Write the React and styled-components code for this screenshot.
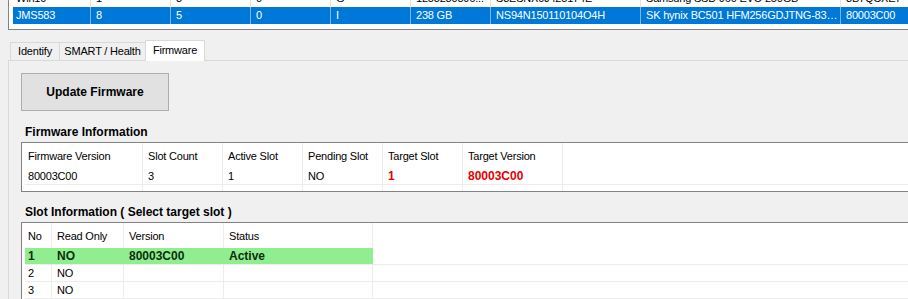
import React from "react";
import styled, { createGlobalStyle } from "styled-components";

const GlobalStyle = createGlobalStyle`
  html, body {
    margin: 0;
    padding: 0;
    background: #f0f0f0;
    overflow: hidden;
  }
  body {
    font-family: "Liberation Sans", Arial, sans-serif;
    font-size: 11px;
    letter-spacing: -0.2px;
    color: #000;
  }
  * {
    box-sizing: border-box;
  }
`;

const Page = styled.div`
  width: 908px;
  height: 299px;
  overflow: hidden;
  background: #f0f0f0;
  display: flex;
  flex-direction: column;
`;

const DriveList = styled.div`
  margin-left: 8px;
  height: 30px;
  flex: none;
  background: #ffffff;
  border-left: 1px solid #828282;
  border-bottom: 1px solid #828282;
  padding-left: 4px;
  overflow: hidden;
`;

const DriveRows = styled.div`
  margin-top: -10px;
`;

const DriveRow = styled.div`
  display: flex;
  height: 17px;
  width: 1000px;
  background: ${(p) => (p.$selected ? "#0078d7" : "transparent")};
  color: ${(p) => (p.$selected ? "#ffffff" : "#000000")};
`;

const DriveCell = styled.div`
  flex: none;
  width: ${(p) => p.$width}px;
  line-height: 17px;
  padding: 0 5px;
  white-space: nowrap;
  overflow: hidden;
  border-right: 1px solid ${(p) => (p.$selected ? "#7fb6e6" : "#e4e4e4")};

  &:first-child {
    padding-left: 3px;
  }
`;

const TabBar = styled.div`
  display: flex;
  align-items: flex-end;
  height: 20px;
  margin-top: 10px;
  padding-left: 10px;
  flex: none;
`;

const Tab = styled.div`
  width: ${(p) => p.$width}px;
  height: ${(p) => (p.$active ? 21 : 18)}px;
  line-height: ${(p) => (p.$active ? 19 : 17)}px;
  margin-left: -1px;
  margin-bottom: ${(p) => (p.$active ? -1 : 0)}px;
  border: 1px solid #d9d9d9;
  border-bottom: none;
  background: ${(p) => (p.$active ? "#ffffff" : "#f0f0f0")};
  text-align: center;
  white-space: nowrap;
  position: ${(p) => (p.$active ? "relative" : "static")};
  z-index: ${(p) => (p.$active ? 1 : "auto")};

  &:first-child {
    margin-left: 0;
  }
`;

const Panel = styled.div`
  flex: 1;
  margin-left: 8px;
  border-top: 1px solid #d9d9d9;
  border-left: 1px solid #d9d9d9;
  background: #f0f0f0;
  padding: 12px 0 0 12px;
  display: flex;
  flex-direction: column;
  align-items: flex-start;
`;

const ActionButton = styled.button`
  width: 148px;
  height: 38px;
  margin: 0 0 1px 0;
  background: #e1e1e1;
  border: 1px solid #adadad;
  border-radius: 0;
  font-family: "Liberation Sans", Arial, sans-serif;
  font-size: 12px;
  font-weight: bold;
  letter-spacing: 0;
  color: #000;
  padding: 0;
`;

const SectionTitle = styled.div`
  margin: 12px 0 2px 4px;
  line-height: 16px;
  font-size: 12px;
  font-weight: bold;
  letter-spacing: 0;
`;

const ListView = styled.div`
  width: 1000px;
  flex: none;
  background: #ffffff;
  border: 1px solid #828282;
  display: flex;
  flex-direction: column;
`;

const ListRow = styled.div`
  display: flex;
  height: ${(p) => p.$height}px;
  margin-left: 3px;
  border-bottom: ${(p) => (p.$lined ? "1px solid #ececec" : "none")};
`;

const ListCell = styled.div`
  flex: none;
  width: ${(p) => p.$width}px;
  display: flex;
  align-items: center;
  padding: 0 5px;
  white-space: nowrap;
  overflow: hidden;
  background: ${(p) => p.$bg || "transparent"};
  border-right: 1px solid ${(p) => p.$bg || "#ececec"};
  color: ${(p) => p.$color || "#000"};
  font-weight: ${(p) => (p.$bold ? "bold" : "normal")};
  font-size: ${(p) => (p.$bold ? 12 : 11)}px;
  letter-spacing: ${(p) => (p.$bold ? 0 : -0.2)}px;

  &:first-child {
    padding-left: 3px;
  }
`;

const Filler = styled.div`
  flex: 1;
`;

const driveColumns = [78, 80, 80, 80, 80, 80, 150, 200, 120];

const drives = [
  ["Win10", "1", "3", "0", "G", "1255280896...", "S3ESNX0J425174E", "Samsung SSD 960 EVO 250GB", "3B7QCXE7"],
  ["JMS583", "8", "5", "0", "I", "238 GB", "NS94N150110104O4H", "SK hynix BC501 HFM256GDJTNG-83…", "80003C00"],
];

const RED = "#e60000";
const GREEN = "#90ee90";
const DARK_GREEN = "#0e2e0e";

const firmwareColumns = [118, 80, 80, 80, 80, 100];
const firmwareRows = [
  {
    cells: [
      { text: "80003C00" },
      { text: "3" },
      { text: "1" },
      { text: "NO" },
      { text: "1", bold: true, color: RED },
      { text: "80003C00", bold: true, color: RED },
    ],
  },
];
const firmwareHeader = ["Firmware Version", "Slot Count", "Active Slot", "Pending Slot", "Target Slot", "Target Version"];

const slotColumns = [27, 72, 100, 149];
const slotHeader = ["No", "Read Only", "Version", "Status"];
const slotRows = [
  {
    bg: GREEN,
    cells: [
      { text: "1", bold: true, color: DARK_GREEN },
      { text: "NO", bold: true, color: DARK_GREEN },
      { text: "80003C00", bold: true, color: DARK_GREEN },
      { text: "Active", bold: true, color: DARK_GREEN },
    ],
  },
  { cells: [{ text: "2" }, { text: "NO" }, { text: "" }, { text: "" }] },
  { cells: [{ text: "3" }, { text: "NO" }, { text: "" }, { text: "" }] },
];

const Table = ({ columns, header, rows, tail }) => (
  <ListView>
    <ListRow $height={25}>
      {header.map((h, i) => (
        <ListCell key={i} $width={columns[i]}>
          {h}
        </ListCell>
      ))}
      <Filler />
    </ListRow>
    {rows.map((row, r) => (
      <ListRow key={r} $height={17} $lined>
        {row.cells.map((c, i) => (
          <ListCell
            key={i}
            $width={columns[i]}
            $bg={row.bg}
            $bold={c.bold}
            $color={c.color}
          >
            {c.text}
          </ListCell>
        ))}
        <Filler />
      </ListRow>
    ))}
    <ListRow $height={tail}>
      {columns.map((w, i) => (
        <ListCell key={i} $width={w} />
      ))}
      <Filler />
    </ListRow>
  </ListView>
);

const App = () => {
  return (
    <Page>
      <GlobalStyle />
      <DriveList>
        <DriveRows>
          {drives.map((d, r) => (
            <DriveRow key={r} $selected={r === 1}>
              {d.map((text, i) => (
                <DriveCell key={i} $width={driveColumns[i]} $selected={r === 1}>
                  {text}
                </DriveCell>
              ))}
            </DriveRow>
          ))}
        </DriveRows>
      </DriveList>

      <TabBar>
        <Tab $width={50}>Identify</Tab>
        <Tab $width={87}>SMART / Health</Tab>
        <Tab $width={60} $active>
          Firmware
        </Tab>
      </TabBar>

      <Panel>
        <ActionButton>Update Firmware</ActionButton>

        <SectionTitle>Firmware Information</SectionTitle>
        <Table
          columns={firmwareColumns}
          header={firmwareHeader}
          rows={firmwareRows}
          tail={6}
        />

        <SectionTitle>Slot Information ( Select target slot )</SectionTitle>
        <Table columns={slotColumns} header={slotHeader} rows={slotRows} tail={20} />
      </Panel>
    </Page>
  );
};

export default App;
